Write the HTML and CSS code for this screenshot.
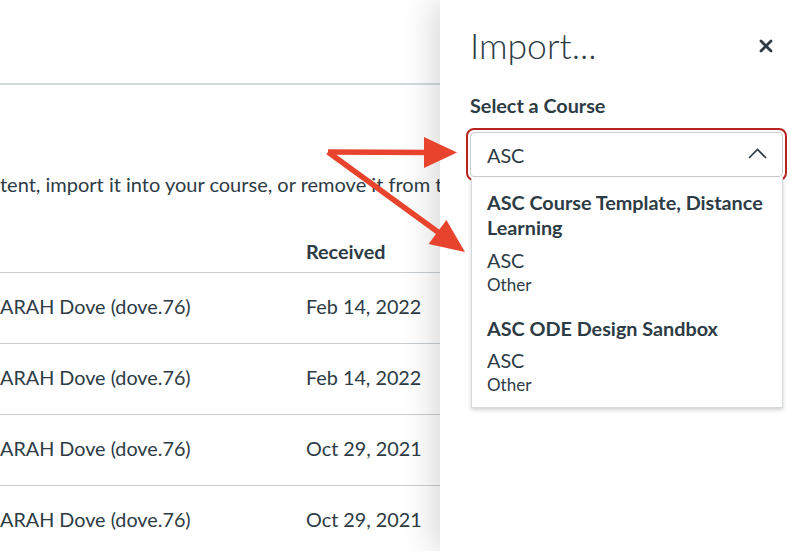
FILE: index.html
```html
<!DOCTYPE html>
<html lang="en">
<head>
<meta charset="utf-8">
<title>Import</title>
<link rel="stylesheet" href="styles.css">
</head>
<body>
<div class="page">
  <div class="topbar"></div>
  <p class="desc">tent, import it into your course, or remove it from the list.</p>
  <div class="table">
    <div class="row head">
      <div class="col-name"></div>
      <div class="col-date">Received</div>
    </div>
    <div class="row">
      <div class="col-name">ARAH Dove (dove.76)</div>
      <div class="col-date">Feb 14, 2022</div>
    </div>
    <div class="row">
      <div class="col-name">ARAH Dove (dove.76)</div>
      <div class="col-date">Feb 14, 2022</div>
    </div>
    <div class="row">
      <div class="col-name">ARAH Dove (dove.76)</div>
      <div class="col-date">Oct 29, 2021</div>
    </div>
    <div class="row">
      <div class="col-name">ARAH Dove (dove.76)</div>
      <div class="col-date">Oct 29, 2021</div>
    </div>
  </div>

  <aside class="tray">
    <div class="tray-head">
      <h1 class="tray-title">Import...</h1>
      <button class="close" aria-label="Close">
        <svg width="14" height="14" viewBox="0 0 14 14"><path d="M2 2 L12 12 M12 2 L2 12" stroke="#2d3b45" stroke-width="2.8" stroke-linecap="round" fill="none"/></svg>
      </button>
    </div>
    <div class="label">Select a Course</div>
    <div class="select-wrap">
      <div class="select">
        <span>ASC</span>
        <svg class="chev" width="19" height="11" viewBox="0 0 19 11"><path d="M1 10 L9.5 1.5 L18 10" stroke="#2d3b45" stroke-width="1.6" fill="none"/></svg>
      </div>
      <ul class="options">
        <li class="option">
          <div class="opt-title">ASC Course Template, Distance Learning</div>
          <div class="opt-sub">ASC</div>
          <div class="opt-small">Other</div>
        </li>
        <li class="option">
          <div class="opt-title">ASC ODE Design Sandbox</div>
          <div class="opt-sub">ASC</div>
          <div class="opt-small">Other</div>
        </li>
      </ul>
    </div>
  </aside>

  <svg class="arrows" width="800" height="551" viewBox="0 0 800 551">
    <g fill="#e8432d" stroke="#e8432d">
      <line x1="328" y1="152" x2="430" y2="152.5" stroke-width="5.5"/>
      <polygon points="424,137 457,152.5 424,168" stroke="none"/>
      <line x1="328" y1="152" x2="442" y2="235" stroke-width="5.5"/>
      <polygon points="428.6,244.1 465,252 446.4,219.9" stroke="none"/>
    </g>
  </svg>
</div>
</body>
</html>
```
FILE: styles.css
```css
* { box-sizing: border-box; }
html, body { margin: 0; padding: 0; }
body {
  font-family: Lato, "Open Sans", sans-serif;
  color: #2d3b45;
  background: #fff;
}
.page {
  position: relative;
  width: 800px;
  height: 551px;
  overflow: hidden;
}
.topbar {
  height: 85px;
  border-bottom: 2px solid #d5dadd;
}
.desc {
  margin: 87px 0 0;
  font-size: 20px;
  line-height: 24px;
  white-space: nowrap;
}
.table { margin-top: 33px; }
.row {
  display: flex;
  align-items: center;
  height: 71px;
  padding-bottom: 4px;
  border-bottom: 1px solid #c7cdd1;
  font-size: 19.8px;
}
.row.head {
  height: 44px;
  padding-bottom: 0;
  font-weight: 700;
}
.col-name { width: 306px; white-space: nowrap; }
.col-date { white-space: nowrap; }

.tray {
  position: absolute;
  top: 0;
  right: 0;
  width: 360px;
  height: 551px;
  background: #fff;
  box-shadow: -6px 0 32px rgba(0, 0, 0, 0.16);
  padding: 24px 27px 0 30px;
  z-index: 2;
}
.tray-head {
  display: flex;
  justify-content: space-between;
  align-items: center;
  height: 44px;
}
.tray-title {
  margin: 0;
  font-size: 35.5px;
  font-weight: 300;
  line-height: 44px;
}
.close {
  border: 0;
  background: none;
  padding: 0;
  width: 14px;
  height: 14px;
  display: flex;
}
.label {
  margin-top: 25px;
  font-size: 19.8px;
  font-weight: 700;
  line-height: 24px;
}
.select-wrap {
  position: relative;
  margin-top: 15px;
  width: 313px;
}
.select {
  height: 45px;
  border: 1px solid #c7cdd1;
  border-radius: 4px;
  outline: 2px solid #b8231f;
  outline-offset: 2px;
  display: flex;
  align-items: center;
  justify-content: space-between;
  padding: 0 15px 0 16px;
  font-size: 19.8px;
}
.chev { margin-top: -2px; }
.options {
  position: absolute;
  top: 46px;
  left: 1px;
  width: 312px;
  margin: 0;
  padding: 0;
  list-style: none;
  background: #fff;
  border: 1px solid #d5dadd;
  border-top: 0;
  box-shadow: 0 2px 4px rgba(0, 0, 0, 0.18);
  z-index: 3;
}
.option {
  padding: 12px 10px 9px 15px;
}
.option + .option { padding-top: 10px; padding-bottom: 10px; }
.option + .option .opt-sub { margin-top: 6.5px; }
.opt-title {
  font-size: 19.8px;
  font-weight: 700;
  line-height: 25px;
}
.opt-sub {
  margin-top: 7.5px;
  font-size: 19.8px;
  line-height: 24px;
}
.opt-small {
  padding-top: 1.5px;
  font-size: 17px;
  line-height: 24px;
}
.arrows {
  position: absolute;
  top: 0;
  left: 0;
  z-index: 5;
  pointer-events: none;
}
```
